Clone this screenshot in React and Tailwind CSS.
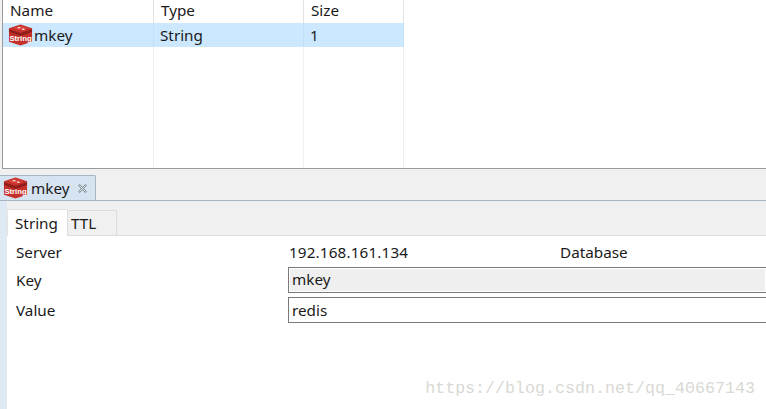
const FONT = "font-['Noto_Sans','Open_Sans',sans-serif]";

function RedisIcon({ className }) {
  return (
    <svg viewBox="0 0 26 22" className={className}>
      <path d="M13 0 L25 4 V18 L13 22 L1 18 V4 Z" fill="#c6302b" />
      <path d="M1 8 L13 12 L25 8 V5 L13 9 L1 5 Z" fill="#8f1f1b" />
      <path d="M13 1.5 L21 4 L13 6.5 L5 4 Z" fill="#d9423a" />
      <path d="M10 3 h3 v1 h-3 Z M15 4 l3 1 l-3 1 Z" fill="#fff" />
      <text x="13" y="17" textAnchor="middle" fill="#fff" fontSize="8" fontWeight="700" fontFamily="Liberation Sans, sans-serif">String</text>
    </svg>
  );
}

function Col({ w, children }) {
  return (
    <div className={`${w} flex flex-col shrink-0`}>
      <div className="h-[23px] pl-[7px] pb-[2px] flex items-center border-r border-[#e2e2e2]">{children[0]}</div>
      <div className="h-[24px] bg-[#cce8ff] pl-[6px] flex items-center border-r border-[#c4e0f7]">{children[1]}</div>
      <div className="flex-1 border-r border-[#f0f0f0]" />
    </div>
  );
}

function FormRow({ label, h, children }) {
  return (
    <div className={`flex items-center ${h}`}>
      <div className="w-[272px] shrink-0 pt-[2px] leading-none">{label}</div>
      {children}
    </div>
  );
}

export default function App() {
  return (
    <div className={`w-[766px] h-[409px] overflow-hidden bg-[#f0f0f0] text-[#1a1a1a] text-[15.25px] ${FONT}`}>
      {/* Key list */}
      <div className="h-[169px] ml-[2px] flex bg-white border-l border-b border-[#9a9a9a]">
        <Col w="w-[151px]">
          <span>Name</span>
          <span className="flex items-center gap-[1px]">
            <RedisIcon className="w-[25px] h-[22px] -ml-[1px]" />
            mkey
          </span>
        </Col>
        <Col w="w-[150px]">
          <span>Type</span>
          <span>String</span>
        </Col>
        <Col w="w-[100px]">
          <span>Size</span>
          <span>1</span>
        </Col>
      </div>

      {/* Editor tab strip */}
      <div className="h-[6px]" />
      <div className="h-[26px] flex items-stretch border-b border-[#a9b4c0]">
        <div className="w-[96px] flex items-center bg-[#d6e4f1] border-r border-t border-[#a9b4c0] pl-[3px] rounded-tr-[2px]">
          <RedisIcon className="w-[25px] h-[22px]" />
          <span className="ml-[3px]">mkey</span>
          <svg viewBox="0 0 12 12" className="w-[11px] h-[11px] ml-[8px]">
            <path d="M2 2 L10 10 M10 2 L2 10" stroke="#7f8a94" strokeWidth="2.4" />
            <path d="M2.5 2.5 L9.5 9.5 M9.5 2.5 L2.5 9.5" stroke="#f4f6f8" strokeWidth="0.9" />
          </svg>
        </div>
      </div>

      {/* Editor body */}
      <div className="h-[208px] bg-[#dfe9f3] pl-[7px]">
        <div className="h-full bg-[#f0f0f0] flex flex-col">
          <div className="h-[8px]" />
          <div className="h-[27px] flex items-stretch border-b border-[#dcdcdc] bg-[#f0f0f0]">
            <div className="w-[60px] -mb-px bg-white flex items-center pl-[7px] border-t border-l border-[#e4e4e4]">String</div>
            <div className="w-[50px] mt-[1px] flex items-center pl-[3px] border border-b-0 border-[#dcdcdc]">TTL</div>
          </div>
          <div className="flex-1 bg-white pl-[9px] pt-[2px]">
            <FormRow label="Server" h="h-[28px]">
              <div className="w-[272px] shrink-0 pl-[1px] tracking-[0.15px]">192.168.161.134</div>
              <div>Database</div>
            </FormRow>
            <FormRow label="Key" h="h-[27px]">
              <div className="flex-1 h-[26px] flex items-center pl-[3px] bg-[#efefef] border border-r-0 border-[#7a7a7a] shadow-[inset_0_0_0_1px_white]">mkey</div>
            </FormRow>
            <div className="h-[4px]" />
            <FormRow label="Value" h="h-[26px]">
              <div className="flex-1 h-[26px] flex items-center pl-[3px] bg-white border border-r-0 border-[#7a7a7a]">redis</div>
            </FormRow>
            <div className="mt-[58px] pr-[11px] text-right text-[#d9d9d4] text-[16.67px] leading-none font-['Liberation_Mono','DejaVu_Sans_Mono',monospace]">
              https://blog.csdn.net/qq_40667143
            </div>
          </div>
        </div>
      </div>
    </div>
  );
}
